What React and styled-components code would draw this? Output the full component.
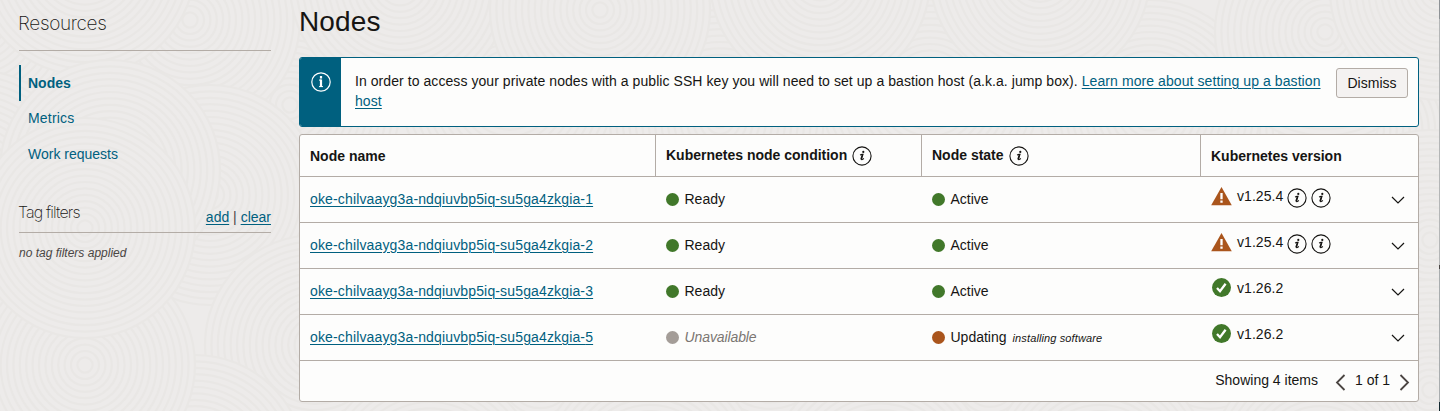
import React from "react";
import styled, { createGlobalStyle } from "styled-components";

const color = {
  page: "#edebea",
  ring: "#e9e7e5",
  panel: "#fdfdfc",
  line: "#b3aca6",
  text: "#161513",
  link: "#00607f",
  green: "#41782a",
  orange: "#aa551c",
  grey: "#a49d98",
};

const GlobalStyle = createGlobalStyle`
  * { box-sizing: border-box; }
  body {
    margin: 0;
    background: ${color.page};
    color: ${color.text};
    font: 14px/20px "Liberation Sans", Arial, sans-serif;
    overflow: hidden;
  }
`;

const Page = styled.div`
  position: relative;
  display: flex;
  height: 411px;
  padding-left: 19px;
  overflow: hidden;
`;

const EdgeRule = styled.div`
  width: 1px;
  margin-left: auto;
  background: linear-gradient(
    #8e9296 0 19px,
    #b4b6b7 19px 265px,
    #4a4645 265px 269px,
    #a9adaf 269px 402px,
    #12282f 402px
  );
`;

const Backdrop = styled.svg`
  position: absolute;
  inset: 0;
  z-index: -1;
`;

const Sidebar = styled.aside`
  width: 252px;
  margin-right: 28px;
`;

const SideTitle = styled.h2`
  margin: 0;
  height: 51px;
  padding-top: 12px;
  border-bottom: 1px solid ${color.line};
  font: 200 19px/24px Inter, sans-serif;
  letter-spacing: -0.35px;
  text-indent: -1px;
`;

const Nav = styled.nav`
  display: flex;
  flex-direction: column;
  margin-top: 14px;
`;

const NavItem = styled.a`
  height: ${(p) => (p.$active ? 36 : 35.5)}px;
  padding-left: ${(p) => (p.$active ? 7 : 9)}px;
  border-left: ${(p) => (p.$active ? `2px solid ${color.link}` : "0")};
  color: ${color.link};
  font-weight: ${(p) => (p.$active ? 700 : 400)};
  line-height: ${(p) => (p.$active ? 37 : 35)}px;
  letter-spacing: ${(p) => p.$spacing || "normal"};
`;

const FilterHeader = styled.div`
  display: flex;
  justify-content: space-between;
  height: 33px;
  margin-top: 28px;
  border-bottom: 1px solid ${color.line};
`;

const FilterTitle = styled.h3`
  margin: 0;
  font: 200 16px/24px Inter, sans-serif;
  letter-spacing: -0.85px;
  text-indent: -1px;
`;

const FilterActions = styled.div`
  padding-top: 7px;
  color: #4a4644;
`;

const Link = styled.a`
  color: ${color.link};
  letter-spacing: ${(p) => p.$spacing || "normal"};
  text-decoration: underline;
  text-underline-offset: 2px;
  text-decoration-thickness: 1px;
`;

const FilterNote = styled.p`
  margin: 10px 0 0;
  color: #4a4644;
  font-size: 12px;
  font-style: italic;
`;

const Main = styled.main`
  width: 1120px;
`;

const Title = styled.h1`
  margin: 0;
  height: 57px;
  padding-top: 5px;
  font-size: 28px;
  font-weight: 400;
  line-height: 34px;
  letter-spacing: 0.15px;
`;

const Banner = styled.section`
  display: flex;
  height: 70px;
  border: 1px solid ${color.link};
  border-radius: 3px;
  background: ${color.panel};
  overflow: hidden;
`;

const BannerIcon = styled.div`
  width: 41px;
  padding: 14px 0 0 11px;
  background: ${color.link};
`;

const BannerText = styled.p`
  flex: 1;
  margin: 0;
  padding: 13px 10px 0 14px;
  letter-spacing: 0.065px;
`;

const Dismiss = styled.button`
  width: 72px;
  height: 30px;
  margin: 10px 10px 0 0;
  padding: 0;
  border: 1px solid ${color.line};
  border-radius: 3px;
  background: #f4f2f1;
  color: ${color.text};
  font: inherit;
`;

const Table = styled.section`
  height: 268px;
  margin-top: 7px;
  border: 1px solid ${color.line};
  border-radius: 3px;
  background: ${color.panel};
`;

const Row = styled.div`
  display: grid;
  grid-template-columns: 356px 266px 279px 1fr;
  height: ${(p) => (p.$header ? 42 : 46)}px;
  border-bottom: 1px solid ${color.line};
  font-weight: ${(p) => (p.$header ? 700 : 400)};
`;

const Cell = styled.div`
  display: flex;
  align-items: center;
  padding: 0 0 ${(p) => p.$lift || 0}px 10px;
  border-right: ${(p) => (p.$divided ? `1px solid ${color.line}` : "0")};
`;

const HeadIcon = styled.span`
  display: flex;
  margin: 2px 0 0 5px;
`;

const Dot = styled.span`
  width: 13px;
  height: 13px;
  margin-right: 5.5px;
  border-radius: 50%;
  background: ${(p) => color[p.$tone]};
`;

const Missing = styled.em`
  color: #7b7672;
  letter-spacing: -0.1px;
`;

const Detail = styled.em`
  margin: 2px 0 0 6px;
  font-size: 11px;
  letter-spacing: 0.12px;
`;

const VersionCell = styled.div`
  display: flex;
  align-items: flex-start;
  padding: 9px 13px 0 10px;
`;

const VersionText = styled.span`
  margin: 0 4px 0 5px;
  letter-spacing: 0.05px;
`;

const InfoGroup = styled.span`
  display: flex;
  gap: 4px;
  padding-top: 2px;
`;

const Expand = styled.span`
  display: flex;
  height: 16px;
  margin: 6px 0 0 auto;
`;

const Footer = styled.footer`
  display: flex;
  justify-content: flex-end;
  padding: 9px 8px 0 0;
`;

const Pager = styled.div`
  display: flex;
  margin-left: 17px;
`;

const PageLabel = styled.span`
  margin: 0 9px;
`;

const PageArrow = styled.svg`
  margin-top: 4px;
`;

const centres = [
  [-20, 20], [290, 105], [510, 90], [720, 120], [930, 90], [1150, 110], [1370, 130],
  [190, 20], [400, -15], [600, 10], [820, -20], [1040, -25], [1325, 32], [1440, -10],
  [85, -35], [-25, 180], [210, 195], [1430, 240], [110, 170],
  [-30, 370], [315, 345], [540, 375], [770, 350], [990, 380], [1210, 350], [1430, 390],
  [195, 465], [85, 365], [430, 480], [650, 470], [880, 475], [1100, 470], [1320, 465],
  [85, 228],
];
const radii = Array.from({ length: 17 }, (_, i) => 110 - i * 6.4);

const Rings = () => (
  <Backdrop width="1440" height="411">
    {centres.map(([x, y]) => (
      <g key={`${x},${y}`} fill={color.page} stroke={color.ring} strokeWidth="2.2">
        {radii.map((r) => <circle key={r} cx={x} cy={y} r={r} />)}
      </g>
    ))}
  </Backdrop>
);

const InfoIcon = () => (
  <svg width="20" height="20" viewBox="0 0 20 20">
    <circle cx="10" cy="10" r="9.1" fill="none" stroke={color.text} strokeWidth="1.1" />
    <circle cx="11.3" cy="5.9" r="1.1" fill={color.text} />
    <path d="M8 9.1 10 8.4h1L9.4 13q-.3 1.5 2.5-.5" fill="none" stroke={color.text} strokeWidth="1.1" />
    <path d="M10.5 8.4 9 13.4" fill="none" stroke={color.text} strokeWidth="1.5" />
  </svg>
);

const BannerInfo = () => (
  <svg width="20" height="20" viewBox="0 0 20 20" fill="none" stroke="#fff">
    <circle cx="10" cy="10" r="9.2" strokeWidth="1.2" />
    <path d="M10 4v2.4M10 7.6V15" strokeWidth="2.2" />
    <path d="M8 8.1h2M8 14.6h4" strokeWidth="1" />
  </svg>
);

const WarnIcon = () => (
  <svg width="21" height="20" viewBox="0 0 21 20">
    <path d="M10.5 1 20.8 19.3H.2Z" fill={color.orange} />
    <path d="M10.5 7v6.2M10.5 14.5v2.2" stroke="#fff" strokeWidth="2.3" />
  </svg>
);

const CheckIcon = () => (
  <svg width="21" height="20" viewBox="0 0 21 20">
    <circle cx="10.5" cy="9.6" r="9.5" fill={color.green} />
    <path d="m6 10 3 3.2 5.6-7.4" fill="none" stroke="#fff" strokeWidth="2.3" />
  </svg>
);

const Chevron = () => (
  <svg width="14" height="16" viewBox="0 0 14 16">
    <path d="m1 5 6 6 6-6" fill="none" stroke={color.text} strokeWidth="1.2" />
  </svg>
);

const Arrow = ({ d }) => (
  <PageArrow width="11" height="17" viewBox="0 0 11 17">
    <path d={d} fill="none" stroke="#4b4542" strokeWidth="1.8" />
  </PageArrow>
);

const nodes = [
  { id: 1, condition: "Ready", state: "Active", version: "v1.25.4", warn: true },
  { id: 2, condition: "Ready", state: "Active", version: "v1.25.4", warn: true },
  { id: 3, condition: "Ready", state: "Active", version: "v1.26.2" },
  { id: 5, condition: null, state: "Updating", detail: "installing software", version: "v1.26.2" },
];

const NodeRow = ({ node }) => (
  <Row>
    <Cell $lift={2}><Link $spacing="0.147px">oke-chilvaayg3a-ndqiuvbp5iq-su5ga4zkgia-{node.id}</Link></Cell>
    <Cell $lift={1}>
      <Dot $tone={node.condition ? "green" : "grey"} />
      {node.condition || <Missing>Unavailable</Missing>}
    </Cell>
    <Cell $lift={1}>
      <Dot $tone={node.detail ? "orange" : "green"} />
      {node.state}
      {node.detail && <Detail>{node.detail}</Detail>}
    </Cell>
    <VersionCell>
      {node.warn ? <WarnIcon /> : <CheckIcon />}
      <VersionText>{node.version}</VersionText>
      {node.warn && <InfoGroup><InfoIcon /><InfoIcon /></InfoGroup>}
      <Expand><Chevron /></Expand>
    </VersionCell>
  </Row>
);

export default function App() {
  return (
    <>
      <GlobalStyle />
      <Page>
        <Rings />
        <Sidebar>
          <SideTitle>Resources</SideTitle>
          <Nav>
            <NavItem $active>Nodes</NavItem>
            <NavItem $spacing="0.2px">Metrics</NavItem>
            <NavItem>Work requests</NavItem>
          </Nav>
          <FilterHeader>
            <FilterTitle>Tag filters</FilterTitle>
            <FilterActions><Link>add</Link> | <Link>clear</Link></FilterActions>
          </FilterHeader>
          <FilterNote>no tag filters applied</FilterNote>
        </Sidebar>
        <Main>
          <Title>Nodes</Title>
          <Banner>
            <BannerIcon><BannerInfo /></BannerIcon>
            <BannerText>
              In order to access your private nodes with a public SSH key you will need to set up a bastion host (a.k.a. jump box).{" "}
              <Link $spacing="0.08px">Learn more about setting up a bastion host</Link>
            </BannerText>
            <Dismiss>Dismiss</Dismiss>
          </Banner>
          <Table>
            <Row $header>
              <Cell $divided>Node name</Cell>
              <Cell $divided $lift={1}>Kubernetes node condition<HeadIcon><InfoIcon /></HeadIcon></Cell>
              <Cell $divided $lift={1}>Node state<HeadIcon><InfoIcon /></HeadIcon></Cell>
              <Cell>Kubernetes version</Cell>
            </Row>
            {nodes.map((node) => <NodeRow key={node.id} node={node} />)}
            <Footer>
              Showing 4 items
              <Pager>
                <Arrow d="M9.5 1 2 8.5 9.5 16" />
                <PageLabel>1 of 1</PageLabel>
                <Arrow d="M1.5 1 9 8.5 1.5 16" />
              </Pager>
            </Footer>
          </Table>
        </Main>
        <EdgeRule />
      </Page>
    </>
  );
}
